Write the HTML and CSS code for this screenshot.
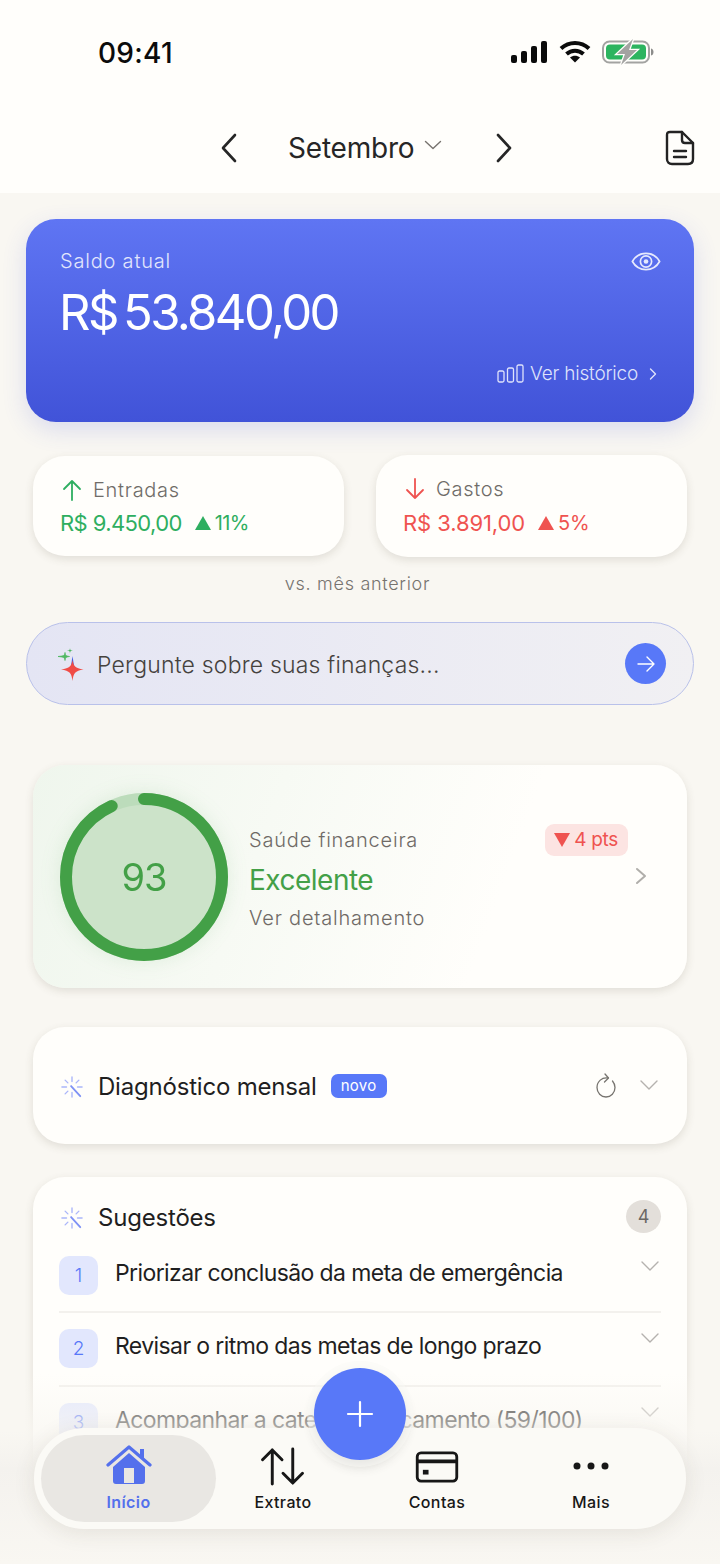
FILE: index.html
```html
<!DOCTYPE html>
<html lang="pt-BR">

<head>
    <meta charset="UTF-8">
    <meta name="viewport" content="width=device-width, initial-scale=1.0">
    <title>Início</title>
    <link rel="stylesheet" href="styles.css">
</head>

<body>
    <div class="screen">
        <header class="top">
            <div class="status">
                <span class="clock">09:41</span>
                <div class="status-icons">
                    <svg width="38" height="24" viewBox="0 0 38 24" fill="#0b0b0b">
                        <rect x="1" y="15" width="6" height="8" rx="2"/>
                        <rect x="11" y="11" width="6" height="12" rx="2"/>
                        <rect x="21" y="6" width="6" height="17" rx="2"/>
                        <rect x="31" y="1" width="6" height="22" rx="2"/>
                    </svg>
                    <svg width="32" height="24" viewBox="0 0 32 24" fill="none" stroke="#0b0b0b" stroke-width="4">
                        <path d="M2 8.500C10 1 22 1 30 8.500"/>
                        <path d="M7.500 14C12.500 9.500 19.500 9.500 24.500 14"/>
                        <path d="M11 17.500L16 22.500L21 17.500C18 15 14 15 11 17.500Z" fill="#0b0b0b" stroke="none"/>
                    </svg>
                    <svg width="52" height="28" viewBox="0 -2 52 28">
                        <rect x="1" y="1.500" width="46" height="21" rx="6.500" fill="none" stroke="#a3a3a1" stroke-width="2"/>
                        <rect x="4" y="4.500" width="40" height="15" rx="4" fill="#2cb45f"/>
                        <path d="M49 8.500C51 9 51.500 10.500 51.500 12C51.500 13.500 51 15 49 15.500Z" fill="#8d8d8b"/>
                        <path d="M31 -1L15 14H23L19 25L35 10H27Z" fill="#a3a3a1" stroke="#fffefb" stroke-width="2.500" paint-order="stroke"/>
                    </svg>
                </div>
            </div>
            <nav class="month-bar">
                <svg class="month-arrow" width="20" height="30" viewBox="0 0 20 30" fill="none" stroke="#262626" stroke-width="2.600" stroke-linecap="round" stroke-linejoin="round">
                    <path d="M16 2L4 15L16 28"/>
                </svg>
                <div class="month-name">
                    <span>Setembro</span>
                    <svg width="18" height="10" viewBox="0 0 18 10" fill="none" stroke="#77736e" stroke-width="1.400" stroke-linecap="round" stroke-linejoin="round">
                        <path d="M1.500 1.500L9 8.500L16.500 1.500"/>
                    </svg>
                </div>
                <svg class="month-arrow" width="20" height="30" viewBox="0 0 20 30" fill="none" stroke="#262626" stroke-width="2.600" stroke-linecap="round" stroke-linejoin="round">
                    <path d="M4 2L16 15L4 28"/>
                </svg>
                <svg class="report-icon" width="30" height="36" viewBox="0 0 30 36" fill="none" stroke="#232323" stroke-width="2.400" stroke-linecap="round" stroke-linejoin="round">
                    <path d="M5 2H17L28 13V29C28 32 26 34 23 34H7C4 34 2 32 2 29V5C2 3 3 2 5 2Z"/>
                    <path d="M17 2V10C17 12 18 13 20 13H28"/>
                    <path d="M9 21H21M9 27H21"/>
                </svg>
            </nav>
        </header>

        <main class="content">
            <section class="balance">
                <div class="balance-head">
                    <span class="balance-label">Saldo atual</span>
                    <svg width="30" height="21" viewBox="0 0 32 22" fill="none" stroke="#e6e9fd" stroke-width="1.800">
                        <path d="M1.500 11C8 -0.500 24 -0.500 30.500 11C24 22.500 8 22.500 1.500 11Z"/>
                        <circle cx="16" cy="11" r="6"/>
                        <circle cx="16" cy="11" r="2.500" fill="#e6e9fd" stroke="none"/>
                    </svg>
                </div>
                <div class="balance-value">R$ 53.840,00</div>
                <div class="balance-link">
                    <svg width="27" height="19" viewBox="0 0 27 19" fill="none" stroke="#dfe3fb" stroke-width="1.300">
                        <rect x="1" y="7" width="6" height="11" rx="1.500"/>
                        <rect x="10.500" y="4" width="6" height="14" rx="1.500"/>
                        <rect x="20" y="1" width="6" height="17" rx="1.500"/>
                    </svg>
                    <span>Ver histórico</span>
                    <svg class="link-chevron" width="8" height="14" viewBox="0 0 8 14" fill="none" stroke="#dfe3fb" stroke-width="1.400" stroke-linecap="round" stroke-linejoin="round">
                        <path d="M1.500 2L6.500 7L1.500 12"/>
                    </svg>
                </div>
            </section>

            <div class="summary">
                <section class="mini-card mini-in">
                    <div class="mini-head">
                        <svg width="20" height="22" viewBox="0 0 20 22" fill="none" stroke="#2eae60" stroke-width="1.800" stroke-linecap="round" stroke-linejoin="round">
                            <path d="M10 21V2M2 10L10 2L18 10"/>
                        </svg>
                        <span>Entradas</span>
                    </div>
                    <div class="mini-value">
                        <span>R$ 9.450,00</span>
                        <span class="mini-delta"><i class="tri"></i>11%</span>
                    </div>
                </section>
                <section class="mini-card mini-out">
                    <div class="mini-head">
                        <svg width="20" height="22" viewBox="0 0 20 22" fill="none" stroke="#ef5350" stroke-width="1.800" stroke-linecap="round" stroke-linejoin="round">
                            <path d="M10 1V20M2 12L10 20L18 12"/>
                        </svg>
                        <span>Gastos</span>
                    </div>
                    <div class="mini-value">
                        <span>R$ 3.891,00</span>
                        <span class="mini-delta"><i class="tri"></i>5%</span>
                    </div>
                </section>
            </div>
            <p class="versus">vs. mês anterior</p>

            <section class="ask">
                <svg width="28" height="34" viewBox="0 0 28 34">
                    <path d="M15.500 9L17 19H14Z" fill="#3f5be0"/>
                    <path d="M15.500 13C16.500 19 18 21 26.500 22.500C18 24 16.500 26 15.500 34C14.500 26 13 24 4 22.500C13 21 14.500 19 15.500 13Z" fill="#f04b46"/>
                    <path d="M8 5.500C8.400 8.500 9 9 12.500 9.500C9 10 8.400 10.600 8 13.500C7.600 10.600 7 10 1 9.500C7 9 7.600 8.500 8 5.500Z" fill="#4fb862" stroke="#4fb862" stroke-width=".8"/>
                    <path d="M13 1C13.200 3 13.500 3.300 16 3.600C13.500 4 13.200 4.300 13 6.500C12.800 4.300 12.500 4 10 3.600C12.500 3.300 12.800 3 13 1Z" fill="#4fb862"/>
                </svg>
                <span class="ask-text">Pergunte sobre suas finanças...</span>
                <span class="ask-send">
                    <svg width="18" height="16" viewBox="0 0 18 16" fill="none" stroke="#fff" stroke-width="1.400" stroke-linecap="round" stroke-linejoin="round">
                        <path d="M1 8H17M10 1L17 8L10 15"/>
                    </svg>
                </span>
            </section>

            <section class="card health">
                <svg class="health-ring" width="170" height="170" viewBox="0 0 170 170">
                    <circle cx="85" cy="85" r="78" fill="#cce3c9"/>
                    <circle cx="85" cy="85" r="78" fill="none" stroke="#bcdcbb" stroke-width="12"/>
                    <circle cx="85" cy="85" r="78" fill="none" stroke="#43a047" stroke-width="12" stroke-linecap="round" stroke-dasharray="456 490" transform="rotate(-90 85 85)"/>
                    <text x="85" y="99" text-anchor="middle" class="ring-score">93</text>
                </svg>
                <div class="health-info">
                    <div class="health-top">
                        <span class="health-label">Saúde financeira</span>
                        <span class="health-pts"><i class="tri tri-down"></i>4 pts</span>
                    </div>
                    <div class="health-status">Excelente</div>
                    <div class="health-label">Ver detalhamento</div>
                </div>
                <svg class="health-chevron" width="12" height="18" viewBox="0 0 12 18" fill="none" stroke="#b0aeaa" stroke-width="2" stroke-linecap="round" stroke-linejoin="round">
                    <path d="M2 2L10 9L2 16"/>
                </svg>
            </section>

            <section class="card diagnosis">
                <svg class="spark" width="22" height="22" viewBox="0 0 24 24" fill="none" stroke="#aab6fa" stroke-width="1.500" stroke-linecap="round">
                    <path d="M12 1V6M12 18V23M1 12H6M18 12H23M4.500 4.500L7.500 7.500M4.500 19.500L7.500 16.500M19.500 4.500L16.500 7.500"/>
                    <path d="M11 11L21 22" stroke="#7f92f5" stroke-width="2"/>
                </svg>
                <h2 class="card-title">Diagnóstico mensal</h2>
                <span class="new-tag">novo</span>
                <svg class="refresh" width="20" height="25" viewBox="0 0 20 25" fill="none" stroke="#77746f" stroke-width="1.300" stroke-linecap="round" stroke-linejoin="round">
                    <path d="M12 5C6 4 1 8.500 1 14.500C1 19.800 5 24 10 24C15 24 19 19.800 19 14.500C19 12 18 9.800 16.500 8"/>
                    <path d="M9 1L12.500 5L8.500 9"/>
                </svg>
                <svg class="row-chevron" width="20" height="12" viewBox="0 0 20 12" fill="none" stroke="#b5b2ae" stroke-width="1.400" stroke-linecap="round" stroke-linejoin="round">
                    <path d="M2 2L10 10L18 2"/>
                </svg>
            </section>

            <section class="card tips">
                <div class="tips-head">
                    <svg class="spark" width="22" height="22" viewBox="0 0 24 24" fill="none" stroke="#aab6fa" stroke-width="1.500" stroke-linecap="round">
                        <path d="M12 1V6M12 18V23M1 12H6M18 12H23M4.500 4.500L7.500 7.500M4.500 19.500L7.500 16.500M19.500 4.500L16.500 7.500"/>
                        <path d="M11 11L21 22" stroke="#7f92f5" stroke-width="2"/>
                    </svg>
                    <h2 class="card-title">Sugestões</h2>
                    <span class="tips-count">4</span>
                </div>
                <div class="tip tip-first">
                    <span class="tip-num">1</span>
                    <span class="tip-text">Priorizar conclusão da meta de emergência</span>
                    <svg class="row-chevron" width="20" height="12" viewBox="0 0 20 12" fill="none" stroke="#b5b2ae" stroke-width="1.400" stroke-linecap="round" stroke-linejoin="round">
                        <path d="M2 2L10 10L18 2"/>
                    </svg>
                </div>
                <div class="tip">
                    <span class="tip-num">2</span>
                    <span class="tip-text">Revisar o ritmo das metas de longo prazo</span>
                    <svg class="row-chevron" width="20" height="12" viewBox="0 0 20 12" fill="none" stroke="#b5b2ae" stroke-width="1.400" stroke-linecap="round" stroke-linejoin="round">
                        <path d="M2 2L10 10L18 2"/>
                    </svg>
                </div>
                <div class="tip">
                    <span class="tip-num">3</span>
                    <span class="tip-text">Acompanhar a categoria Orçamento (59/100)</span>
                    <svg class="row-chevron" width="20" height="12" viewBox="0 0 20 12" fill="none" stroke="#b5b2ae" stroke-width="1.400" stroke-linecap="round" stroke-linejoin="round">
                        <path d="M2 2L10 10L18 2"/>
                    </svg>
                </div>
            </section>
        </main>

        <div class="bottom-fade"></div>

        <button class="fab">
            <svg width="28" height="28" viewBox="0 0 28 28" fill="none" stroke="#fff" stroke-width="2.200" stroke-linecap="round">
                <path d="M14 2V26M2 14H26"/>
            </svg>
        </button>

        <nav class="tabbar">
            <div class="tab tab-active">
                <svg width="46" height="40" viewBox="0 0 46 40">
                    <path d="M2 20L23 2L44 20" fill="none" stroke="#5470ec" stroke-width="3.200" stroke-linecap="round" stroke-linejoin="round"/>
                    <path d="M34 4H38V14L34 10Z" fill="#5470ec"/>
                    <path fill-rule="evenodd" d="M23 8L39 22V36C39 38 38 39 36 39H10C8 39 7 38 7 36V22ZM18 23V38H28V23Z" fill="#5470ec"/>
                </svg>
                <span>Início</span>
            </div>
            <div class="tab">
                <svg class="tab-arrows" width="46" height="39" viewBox="0 0 46 40" fill="none" stroke="#171717" stroke-width="3" stroke-linecap="round" stroke-linejoin="round">
                    <path d="M12 38V3M2 13L12 3L22 13"/>
                    <path d="M33 2V37M23 27L33 37L43 27"/>
                </svg>
                <span>Extrato</span>
            </div>
            <div class="tab">
                <svg class="tab-card" width="44" height="32" viewBox="0 0 46 34" fill="none" stroke="#171717" stroke-width="3">
                    <rect x="2" y="2" width="42" height="30" rx="4"/>
                    <path d="M2 11H44" stroke-width="4"/>
                    <rect x="8" y="20" width="6" height="5" fill="#171717" stroke="none"/>
                </svg>
                <span>Contas</span>
            </div>
            <div class="tab">
                <svg class="tab-dots" width="36" height="8" viewBox="0 0 36 8" fill="#171717">
                    <circle cx="4" cy="4" r="3.500"/>
                    <circle cx="18" cy="4" r="3.500"/>
                    <circle cx="32" cy="4" r="3.500"/>
                </svg>
                <span>Mais</span>
            </div>
        </nav>
    </div>
</body>

</html>
```

FILE: styles.css
```css
* {
    box-sizing: border-box;
}
body {
    margin: 0;
    font-family: Inter, "Liberation Sans", sans-serif;
    background-color: #f9f7f2;
    color: #1f1f1f;
}
.screen {
    position: relative;
    width: 720px;
    height: 1564px;
    overflow: hidden;
    background-color: #f9f7f2;
}

/* header */
.top {
    height: 193px;
    background-color: #fffefb;
}
.status {
    display: flex;
    justify-content: space-between;
    align-items: center;
    height: 106px;
    padding: 0 66px 0 98px;
}
.clock {
    font-size: 28px;
    font-weight: 500;
    letter-spacing: 0.3px;
    color: #0b0b0b;
}
.status-icons {
    display: flex;
    align-items: center;
    gap: 11px;
    margin-top: -3px;
}
.month-bar {
    position: relative;
    display: flex;
    align-items: center;
    height: 84px;
    padding-left: 219px;
}
.month-name {
    display: flex;
    align-items: center;
    gap: 10px;
    width: 255px;
    padding-left: 49px;
    font-size: 28px;
    letter-spacing: -0.2px;
    color: #262626;
}
.month-name svg {
    margin-top: -6px;
}
.report-icon {
    position: absolute;
    right: 25px;
    top: 24px;
}

.content {
    padding: 26px 26px 0;
}

/* saldo */
.balance {
    height: 203px;
    padding: 30px 33px 0 34px;
    border-radius: 30px;
    background: linear-gradient(180deg, #5f75f3 0%, #4153d8 100%);
    box-shadow: 0 8px 24px rgba(65, 83, 216, 0.16);
    color: #ffffff;
}
.balance-head {
    display: flex;
    justify-content: space-between;
    align-items: center;
}
.balance-label {
    font-size: 20px;
    font-weight: 300;
    letter-spacing: 0.8px;
    color: #e2e6fc;
}
.balance-value {
    margin: 11px 0 0 -1px;
    font-size: 49px;
    line-height: 58px;
    letter-spacing: -2.6px;
    word-spacing: -5px;
}
.balance-link {
    display: flex;
    justify-content: flex-end;
    align-items: center;
    gap: 6px;
    margin-top: 20px;
    padding-right: 4px;
    font-size: 19px;
    font-weight: 300;
    letter-spacing: -0.2px;
    color: #dfe3fb;
}
.link-chevron {
    margin-left: 5px;
}

/* entradas / gastos */
.summary {
    display: flex;
    justify-content: space-between;
    align-items: center;
    padding: 0 7px;
    margin-top: 33px;
}
.mini-card {
    width: 311px;
    height: 102px;
    padding: 22px 27px 0;
    border-radius: 32px;
    background-color: #fffefb;
    box-shadow: 0 3px 8px rgba(80, 70, 50, 0.14);
}
.mini-in {
    height: 100px;
    color: #2eae60;
}
.mini-out {
    color: #ef5350;
}
.mini-head {
    display: flex;
    align-items: center;
    gap: 11px;
    padding-left: 2px;
    font-size: 20px;
    font-weight: 300;
    letter-spacing: 0.7px;
    color: #6f6c68;
}
.mini-value {
    display: flex;
    align-items: center;
    gap: 13px;
    margin-top: 8px;
    font-size: 22px;
    letter-spacing: -0.6px;
}
.mini-out .mini-value {
    margin-top: 9px;
    letter-spacing: -0.1px;
}
.mini-delta {
    display: flex;
    align-items: center;
    gap: 4px;
    font-size: 20px;
}
.tri {
    width: 0;
    height: 0;
    border-left: 8px solid transparent;
    border-right: 8px solid transparent;
    border-bottom: 14px solid currentColor;
}
.tri-down {
    border-bottom: 0;
    border-top: 14px solid currentColor;
}
.versus {
    margin: 17px 0 0;
    padding-right: 5px;
    text-align: center;
    font-size: 18px;
    font-weight: 300;
    letter-spacing: 0.7px;
    line-height: 20px;
    color: #76736f;
}

/* pergunta */
.ask {
    display: flex;
    align-items: center;
    height: 83px;
    margin-top: 28px;
    padding: 0 27px 0 30px;
    border: 1.500px solid #b9c1ea;
    border-radius: 42px;
    background: linear-gradient(90deg, #e4e5f4 0%, #f1f0f3 100%);
}
.ask-text {
    flex: 1;
    margin: 2px 0 0 12px;
    font-size: 23px;
    font-weight: 300;
    letter-spacing: 0.2px;
    color: #45423e;
}
.ask-send {
    display: flex;
    align-items: center;
    justify-content: center;
    width: 41px;
    height: 41px;
    border-radius: 50%;
    background-color: #5878f8;
}

/* cards */
.card {
    position: relative;
    margin: 0 7px;
    border-radius: 32px;
    background-color: #fffefb;
    box-shadow: 0 3px 8px rgba(80, 70, 50, 0.14);
}
.card-title {
    margin: 2px 0 0;
    font-size: 24px;
    font-weight: 400;
    letter-spacing: -0.2px;
    color: #1f1f1f;
}
.health {
    display: flex;
    align-items: center;
    height: 223px;
    margin-top: 60px;
    padding-left: 26px;
    background: linear-gradient(110deg, #eff6ed 0%, #fffefb 70%);
}
.health-ring {
    filter: drop-shadow(0 0 10px rgba(67, 160, 71, 0.12));
}
.ring-score {
    font-family: Inter, "Liberation Sans", sans-serif;
    font-size: 38px;
    font-weight: 400;
    letter-spacing: -1px;
    fill: #43a047;
}
.health-info {
    width: 379px;
    margin-left: 20px;
}
.health-top {
    display: flex;
    justify-content: space-between;
    align-items: center;
}
.health-label {
    font-size: 20px;
    font-weight: 300;
    letter-spacing: 0.8px;
    color: #6f6a66;
}
.health-pts {
    display: flex;
    align-items: center;
    gap: 4px;
    height: 32px;
    padding: 0 10px 0 9px;
    border-radius: 9px;
    background-color: #fce4e2;
    color: #ef5350;
    font-size: 19px;
    letter-spacing: -0.3px;
}
.health-status {
    margin: 7px 0 9px;
    font-size: 28px;
    letter-spacing: -0.5px;
    color: #43a047;
}
.health-chevron {
    position: absolute;
    right: 40px;
    top: 102px;
}
.diagnosis {
    display: flex;
    align-items: center;
    height: 117px;
    margin-top: 39px;
    padding: 0 28px 0 28px;
}
.diagnosis .spark,
.tips-head .spark {
    margin: 2px 15px 0 0;
}
.new-tag {
    height: 24px;
    margin-left: 14px;
    padding: 0 10px;
    border-radius: 7px;
    background-color: #5878f8;
    color: #ffffff;
    font-size: 15px;
    letter-spacing: 0.3px;
    line-height: 23px;
}
.refresh {
    margin-left: auto;
}
.diagnosis .row-chevron {
    margin: -2px 0 0 23px;
}
.tips {
    height: 420px;
    margin-top: 33px;
    padding: 0 26px;
}
.tips-head {
    display: flex;
    align-items: center;
    height: 79px;
    padding-left: 2px;
}
.tips-count {
    display: flex;
    align-items: center;
    justify-content: center;
    width: 35px;
    height: 33px;
    margin-left: auto;
    border-radius: 50%;
    background-color: #e3dfda;
    color: #6b6864;
    font-size: 18px;
}
.tip {
    position: relative;
    display: flex;
    gap: 17px;
    height: 74px;
    padding-top: 16px;
    border-bottom: 2px solid #f3f1ed;
}
.tip-first {
    height: 57px;
    padding-top: 0;
}
.tip-num {
    display: flex;
    align-items: center;
    justify-content: center;
    width: 39px;
    height: 39px;
    border-radius: 10px;
    background-color: #e2e7fd;
    color: #5878f8;
    font-size: 19px;
    font-weight: 300;
}
.tip-text {
    font-size: 23px;
    letter-spacing: -0.6px;
    line-height: 34px;
    color: #1f1f1f;
}
.tip .row-chevron {
    position: absolute;
    right: 1px;
    top: 19px;
}
.tip-first .row-chevron {
    top: 4px;
}

/* fade + barra inferior */
.bottom-fade {
    position: absolute;
    left: 0;
    right: 0;
    bottom: 0;
    height: 190px;
    background: linear-gradient(180deg, rgba(249, 247, 242, 0) 0%, rgba(249, 247, 242, 0.7) 30%, #f4f2ee 50%, #f9f7f2 100%);
}
.fab {
    position: absolute;
    z-index: 3;
    left: 314px;
    top: 1368px;
    display: flex;
    align-items: center;
    justify-content: center;
    width: 92px;
    height: 92px;
    border: none;
    border-radius: 50%;
    background-color: #5878f8;
    box-shadow: 0 0 0 7px rgba(250, 249, 245, 0.5), 0 6px 12px rgba(60, 60, 60, 0.2);
}
.tabbar {
    position: absolute;
    z-index: 2;
    left: 34px;
    top: 1428px;
    display: flex;
    width: 652px;
    height: 101px;
    padding: 7px;
    border-radius: 50px;
    background-color: #fbfaf6;
    box-shadow: 0 4px 22px rgba(70, 60, 40, 0.1);
}
.tab {
    display: flex;
    flex-direction: column;
    align-items: center;
    justify-content: flex-end;
    flex: 0 0 154px;
    gap: 7px;
    padding-bottom: 10px;
    font-size: 16px;
    font-weight: 500;
    letter-spacing: 0.4px;
    color: #171717;
}
.tab-active {
    flex-basis: 175px;
    margin-right: -10px;
    border-radius: 44px;
    background-color: #e9e7e3;
    color: #5470ec;
    font-weight: 600;
}
.tab-arrows {
    margin-bottom: -1px;
}
.tab-card {
    margin-bottom: 2px;
}
.tab-dots {
    margin-bottom: 15px;
}
```
